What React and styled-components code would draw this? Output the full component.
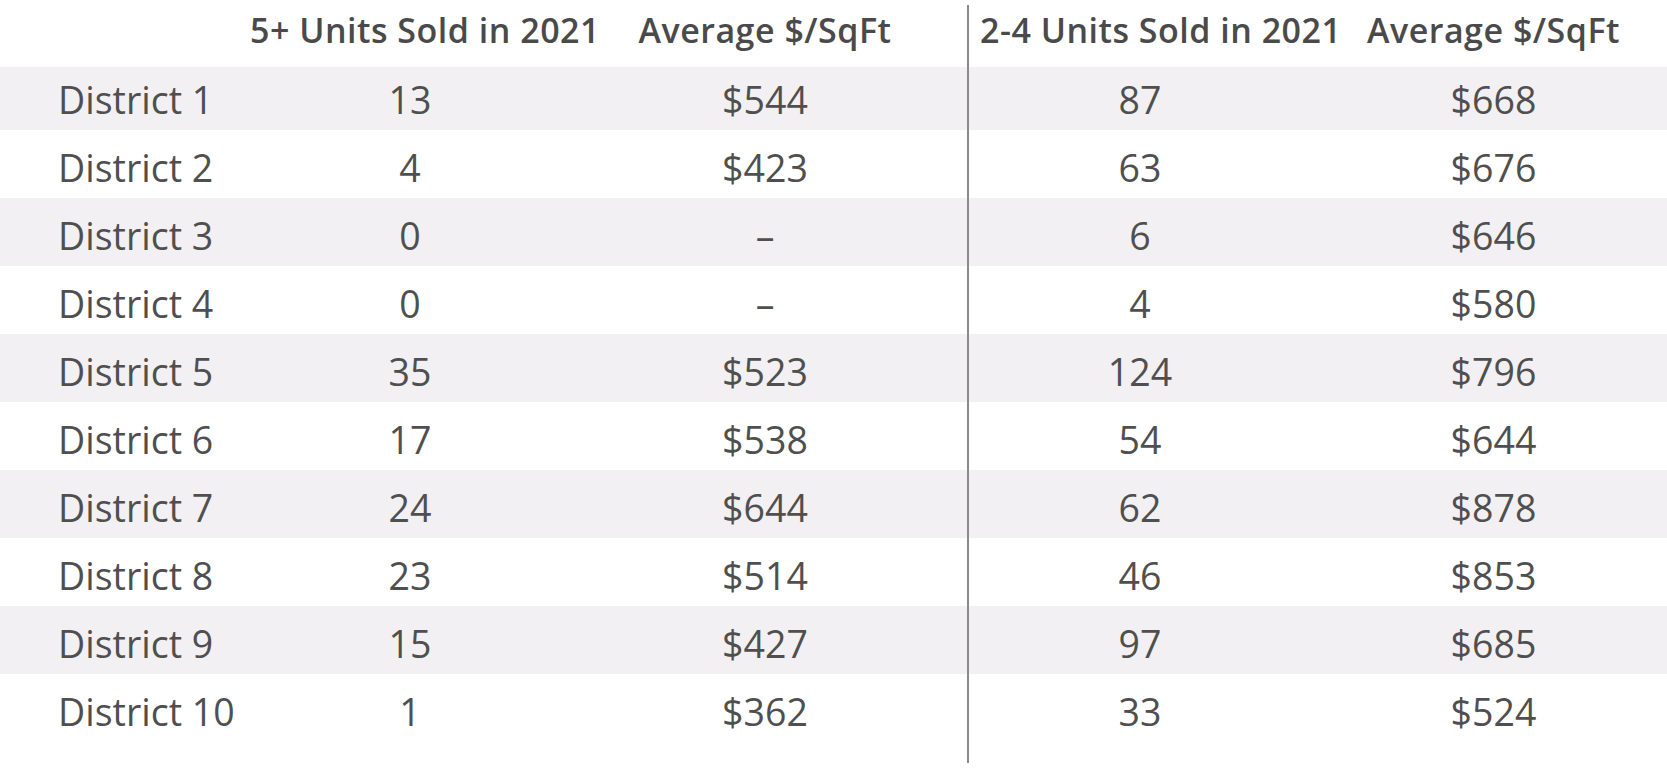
import React from 'react';
import styled, { createGlobalStyle } from 'styled-components';

const rows = [
  ['District 1', '13', '$544', '87', '$668'],
  ['District 2', '4', '$423', '63', '$676'],
  ['District 3', '0', '–', '6', '$646'],
  ['District 4', '0', '–', '4', '$580'],
  ['District 5', '35', '$523', '124', '$796'],
  ['District 6', '17', '$538', '54', '$644'],
  ['District 7', '24', '$644', '62', '$878'],
  ['District 8', '23', '$514', '46', '$853'],
  ['District 9', '15', '$427', '97', '$685'],
  ['District 10', '1', '$362', '33', '$524'],
];

const GlobalStyle = createGlobalStyle`
  body {
    margin: 0;
    background: #fff;
    font-family: "Open Sans", "Noto Sans", sans-serif;
    color: #4f4f4f;
  }
`;

const App = () => (
  <>
    <GlobalStyle />
    <Table>
      <HeaderRow>
        <span />
        <HeadCell $start={0}>5+ Units Sold in 2021</HeadCell>
        <HeadCell>Average $/SqFt</HeadCell>
        <HeadCell $start={20}>2-4 Units Sold in 2021</HeadCell>
        <HeadCell>Average $/SqFt</HeadCell>
      </HeaderRow>
      {rows.map((r, i) => (
        <Row key={r[0]} $striped={i % 2 === 0} $first={i === 0}>
          <Label>{r[0]}</Label>
          <Cell>{r[1]}</Cell>
          <Cell>{r[2]}</Cell>
          <Cell>{r[3]}</Cell>
          <Cell>{r[4]}</Cell>
        </Row>
      ))}
      <Divider />
    </Table>
  </>
);

const Table = styled.div`
  position: relative;
  width: 1667px;
  padding-bottom: 39px;
`;

const columns = `250px 320px 390px 360px 1fr`;

const HeaderRow = styled.div`
  display: grid;
  grid-template-columns: ${columns};
  align-items: center;
  height: 62px;
  padding-bottom: 2px;
  box-sizing: border-box;
`;

// $start: left-aligned from an offset; otherwise centred in the column
const HeadCell = styled.div`
  font-size: 34px;
  font-weight: 600;
  letter-spacing: 0.5px;
  color: #4a4a4a;
  white-space: nowrap;
  text-align: ${(p) => (p.$start === undefined ? 'center' : 'left')};
  padding-left: ${(p) => p.$start || 0}px;
`;

const Row = styled.div`
  display: grid;
  grid-template-columns: ${columns};
  align-items: center;
  height: 68px;
  padding-top: 6px;
  box-sizing: border-box;
  background: ${(p) =>
    p.$first
      ? 'linear-gradient(#fff 0 5px, #f2f0f3 5px)'
      : p.$striped
      ? '#f2f0f3'
      : '#fff'};
`;

const Label = styled.div`
  font-size: 37.5px;
  padding-left: 58px;
  white-space: nowrap;
`;

const Cell = styled.div`
  font-size: 37.5px;
  text-align: center;
`;

const Divider = styled.div`
  position: absolute;
  left: 967px;
  top: 5px;
  bottom: 18px;
  width: 2px;
  background: #8a8a8a;
`;

export default App;
